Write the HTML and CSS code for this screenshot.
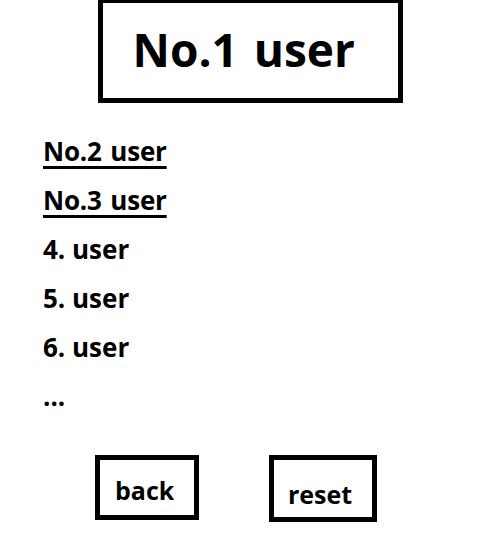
FILE: index.html
```html
<!DOCTYPE html>
<html>
<head>
<meta charset="utf-8">
<link rel="stylesheet" href="styles.css">
</head>
<body>
<div class="title"><span>No.1 user</span></div>
<ul class="ranks">
  <li class="top">No.2 user</li>
  <li class="top">No.3 user</li>
  <li>4. user</li>
  <li>5. user</li>
  <li>6. user</li>
  <li class="more">...</li>
</ul>
<div class="actions">
  <div class="btn back">back</div>
  <div class="btn reset">reset</div>
</div>
</body>
</html>
```
FILE: styles.css
```css
html, body {
  margin: 0;
  padding: 0;
  background: #fff;
}
body {
  font-family: "Open Sans", "Noto Sans CJK KR", sans-serif;
  font-weight: 700;
  color: #000;
  width: 500px;
  height: 550px;
  overflow: hidden;
}
.title {
  box-sizing: border-box;
  width: 305px;
  height: 105px;
  margin: -2px auto 0;
  border: 5px solid #000;
  padding: 0 0 4px 30px;
  display: flex;
  align-items: center;
  font-size: 46px;
  line-height: 1;
  word-spacing: 4px;
}
.ranks {
  list-style: none;
  margin: 28px 0 0;
  padding: 0 0 0 43px;
  font-size: 26px;
}
.ranks li {
  height: 49px;
  line-height: 40px;
}
.ranks li.top {
  text-decoration: underline;
  text-decoration-thickness: 3px;
  text-underline-offset: 5px;
  word-spacing: 2px;
  letter-spacing: -0.2px;
}
.actions {
  display: flex;
  align-items: flex-start;
  gap: 70px;
  margin: 30px 0 0 95px;
}
.btn {
  box-sizing: border-box;
  border: 5px solid #000;
  font-size: 25px;
  line-height: 1;
}
.back {
  width: 104px;
  height: 65px;
  padding: 18px 0 0 15px;
}
.reset {
  width: 108px;
  height: 67px;
  padding: 22px 0 0 14px;
}
```
